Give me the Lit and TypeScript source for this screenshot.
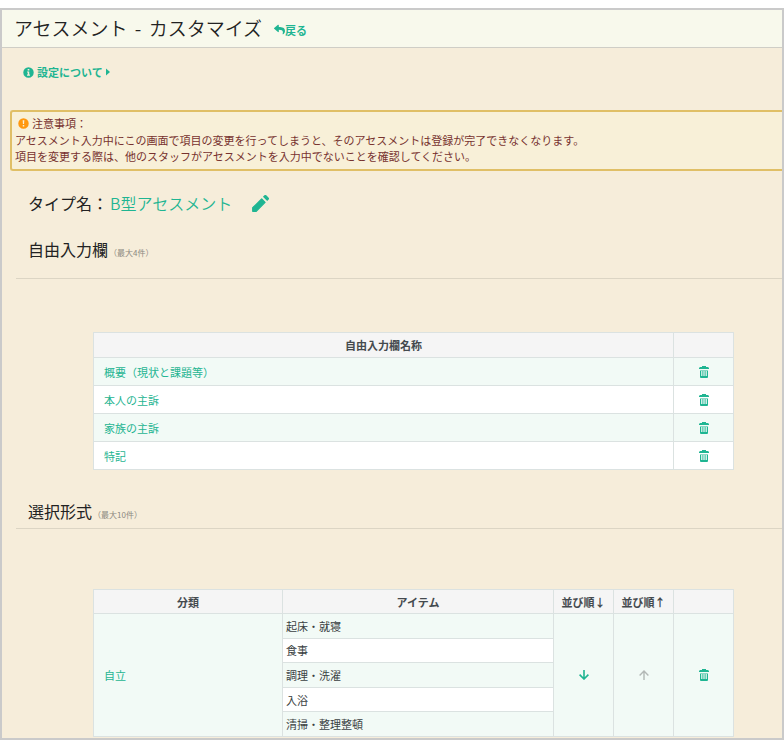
import { LitElement, html, css, svg } from "lit";
import { customElement, property } from "lit/decorators.js";

const shapes: Record<string, { box: string; body: unknown }> = {
  reply: {
    box: "0 0 512 512",
    body: svg`<path d="M8.309 189.836L184.313 37.851C199.719 24.546 224 35.347 224 56.015v80.053c160.629 1.839 288 34.032 288 186.258 0 61.441-39.581 122.309-83.333 154.132-13.653 9.931-33.111-2.533-28.077-18.631 45.344-145.012-21.507-183.51-176.59-185.742V360c0 20.7-24.3 31.453-39.687 18.164l-176.004-152c-11.071-9.562-11.086-26.753 0-36.328z"/>`,
  },
  info: {
    box: "0 0 12 12",
    body: svg`<path fill-rule="evenodd" d="M6 0.3a5.7 5.7 0 1 0 0 11.4a5.7 5.7 0 0 0 0-11.4zM5.1 2.2h1.8v1.7H5.1zM4.4 4.9h2.4v3.4h.8v1.3H4.4V8.300h.8V6.100h-.8z"/>`,
  },
  warn: {
    box: "0 0 12 12",
    body: svg`<path fill-rule="evenodd" d="M6 0.300a5.700 5.700 0 1 0 0 11.400a5.700 5.700 0 0 0 0-11.400zM5.100 2.400h1.800l-.3 4.200H5.400zM5.200 7.700h1.600v1.600H5.200z"/>`,
  },
  caret: { box: "0 0 4 8", body: svg`<path d="M0 0.500v7L4 4z"/>` },
  pencil: {
    box: "2.500 2.500 19 19",
    body: svg`<path stroke="currentColor" stroke-width="1.400" stroke-linejoin="round" d="M3.300 16.800v3.900h3.900L17.100 10.700l-3.800-3.800z"/><path d="M21.100 7.640a1.500 1.500 0 0 0 0-2.100l-2.640-2.640a1.500 1.500 0 0 0-2.100 0l-1.630 1.630 4.740 4.740z"/>`,
  },
  trash: {
    box: "0 0 10 12",
    body: svg`<path d="M3 0h4v1h2l1 1v1H0V2l1-1h2z"/><path fill-rule="evenodd" d="M1 4.500h8V11a1 1 0 0 1-1 1H2a1 1 0 0 1-1-1zM2.200 5v5h1.200V5zM4.400 5v5h1.200V5zM6.600 5v5h1.200V5z"/>`,
  },
  down: {
    box: "0 0 10 10",
    body: svg`<path fill="none" stroke="currentColor" stroke-width="1.600" d="M5 0v9M0.600 4.600L5 9l4.400-4.400"/>`,
  },
  up: {
    box: "0 0 10 10",
    body: svg`<path fill="none" stroke="currentColor" stroke-width="1.400" d="M5 10V1M0.600 5.400L5 1l4.400 4.400"/>`,
  },
};

@customElement("ui-icon")
class UiIcon extends LitElement {
  @property() name = "info";

  static styles = css`
    :host { display: inline-flex; flex: none; }
    svg { width: 100%; height: 100%; fill: currentColor; }
  `;

  render() {
    const shape = shapes[this.name];
    return html`<svg viewBox=${shape.box} aria-hidden="true">${shape.body}</svg>`;
  }
}

interface Category {
  name: string;
  items: string[];
}

@customElement("app-root")
class AppRoot extends LitElement {
  private freeFields = ["概要（現状と課題等）", "本人の主訴", "家族の主訴", "特記"];
  private categories: Category[] = [
    { name: "自立", items: ["起床・就寝", "食事", "調理・洗濯", "入浴", "清掃・整理整頓"] },
  ];

  static styles = css`
    :host {
      display: block;
      background: #fff;
      padding-top: 8px;
      font-family: "Noto Sans CJK JP", "Noto Sans", sans-serif;
      font-size: 11px;
      line-height: 16px;
      color: #3a3f42;
    }
    .frame { border: 2px solid #cacaca; background: #f6edda; overflow: hidden; }
    .header {
      display: flex;
      align-items: center;
      gap: 12px;
      height: 35px;
      padding: 0 0 2px 12px;
      background: #f8f9ec;
      border-bottom: 1px solid #cfcec6;
    }
    h1, h2, p { margin: 0; }
    h1 { font-size: 19px; font-weight: 350; line-height: 28px; color: #222; }
    .dash { margin: 0 3px; }
    a { color: #1fb592; text-decoration: none; }
    button {
      display: inline-flex;
      align-items: center;
      justify-content: center;
      padding: 0;
      border: 0;
      background: none;
      font: inherit;
      color: #1fb592;
      cursor: pointer;
    }
    button:disabled { color: #b3b8b6; cursor: default; }
    .back, .about { display: inline-flex; align-items: center; font-weight: 700; }
    .back { padding-top: 4px; }
    .about { gap: 3px; margin: 16px 0 30px 21px; }
    .i-s { width: 11px; height: 11px; }
    .i-caret { width: 4px; height: 8px; }
    .i-pencil { width: 17px; height: 17px; }
    .i-trash { width: 10px; height: 12px; }
    .i-arrow { width: 10px; height: 10px; }
    .notice {
      margin-left: 8px;
      padding: 2px 3px 5px;
      border: 2px solid #e0bf66;
      border-right: 0;
      border-radius: 3px 0 0 3px;
      background: #f8f0d8;
      color: #77322f;
    }
    .notice-head { display: flex; align-items: center; gap: 3px; height: 18px; padding-left: 3px; }
    .notice-head ui-icon { color: #ff980f; }
    .type { display: flex; align-items: center; margin: 20px 0 0 26px; }
    h2 { font-size: 16px; font-weight: 400; line-height: 24px; color: #222; }
    .type-name { color: #1fb592; font-weight: 350; margin-left: 2px; }
    .type button { margin-left: 20px; }
    .section { margin-left: 14px; padding-left: 12px; border-bottom: 1px solid #dcd5c4; }
    .free { padding-top: 22px; padding-bottom: 13px; }
    .choice { padding-top: 29px; padding-bottom: 1px; }
    small { font-size: 8px; color: #8b887f; margin-left: 1px; }
    .table-area { padding: 53px 48px 0 91px; }
    .last { padding-top: 60px; }
    table { width: 100%; border-collapse: collapse; table-layout: fixed; background: #fff; }
    th, td { border: 1px solid #dbe2e1; padding: 0; }
    th { height: 24px; background: #f5f5f5; font-weight: 700; color: #444a4e; }
    td { height: 27px; text-align: center; }
    td button { display: flex; margin: 0 auto; }
    .name { padding-left: 10px; text-align: left; }
    .tint { background: #f2faf6; }
    .free-table tbody tr:nth-child(odd) { background: #f2faf6; }
    .choice-table th { height: 23px; }
    .choice-table td { height: 122px; }
    .choice-table .item { height: 23px; padding-left: 3px; text-align: left; }
    .c-op { width: 60px; }
    .c-cat { width: 189px; }
    .spacer { height: 1px; }
  `;

  private trash(name: string) {
    return html`<button aria-label="${name}を削除"><ui-icon class="i-trash" name="trash"></ui-icon></button>`;
  }

  private categoryRows(c: Category) {
    const n = c.items.length;
    return c.items.map(
      (item, i) => html`<tr>
        ${i === 0 ? html`<td class="name tint" rowspan=${n}><a href="#">${c.name}</a></td>` : null}
        <td class="item ${i % 2 === 0 ? "tint" : ""}">${item}</td>
        ${i === 0
          ? html`<td class="tint" rowspan=${n}>
                <button aria-label="下へ移動"><ui-icon class="i-arrow" name="down"></ui-icon></button>
              </td>
              <td class="tint" rowspan=${n}>
                <button aria-label="上へ移動" disabled><ui-icon class="i-arrow" name="up"></ui-icon></button>
              </td>
              <td class="tint" rowspan=${n}>${this.trash(c.name)}</td>`
          : null}
      </tr>`
    );
  }

  render() {
    return html`<main class="frame">
      <header class="header">
        <h1>アセスメント<span class="dash"> - </span>カスタマイズ</h1>
        <a class="back" href="#"><ui-icon class="i-s" name="reply"></ui-icon>戻る</a>
      </header>
      <button class="about">
        <ui-icon class="i-s" name="info"></ui-icon><span>設定について</span
        ><ui-icon class="i-caret" name="caret"></ui-icon>
      </button>
      <section class="notice">
        <p class="notice-head"><ui-icon class="i-s" name="warn"></ui-icon>注意事項：</p>
        <p>アセスメント入力中にこの画面で項目の変更を行ってしまうと、そのアセスメントは登録が完了できなくなります。</p>
        <p>項目を変更する際は、他のスタッフがアセスメントを入力中でないことを確認してください。</p>
      </section>
      <div class="type">
        <h2>タイプ名：<span class="type-name">B型アセスメント</span></h2>
        <button aria-label="タイプ名を編集"><ui-icon class="i-pencil" name="pencil"></ui-icon></button>
      </div>
      <div class="section free"><h2>自由入力欄<small>（最大4件）</small></h2></div>
      <div class="table-area">
        <table class="free-table">
          <colgroup><col /><col class="c-op" /></colgroup>
          <thead><tr><th>自由入力欄名称</th><th></th></tr></thead>
          <tbody>
            ${this.freeFields.map(
              (f) => html`<tr><td class="name"><a href="#">${f}</a></td><td>${this.trash(f)}</td></tr>`
            )}
          </tbody>
        </table>
      </div>
      <div class="section choice"><h2>選択形式<small>（最大10件）</small></h2></div>
      <div class="table-area last">
        <table class="choice-table">
          <colgroup>
            <col class="c-cat" /><col /><col class="c-op" /><col class="c-op" /><col class="c-op" />
          </colgroup>
          <thead>
            <tr><th>分類</th><th>アイテム</th><th>並び順↓</th><th>並び順↑</th><th></th></tr>
          </thead>
          <tbody>${this.categories.map((c) => this.categoryRows(c))}</tbody>
        </table>
        <div class="spacer"></div>
      </div>
    </main>`;
  }
}
